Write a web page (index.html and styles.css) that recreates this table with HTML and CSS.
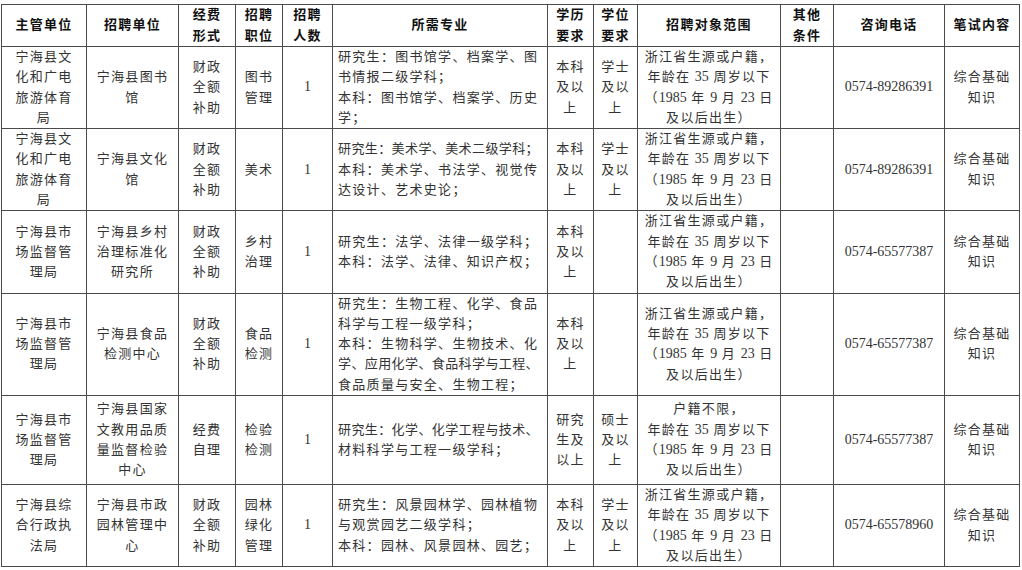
FILE: index.html
```html
<!DOCTYPE html>
<html lang="zh-CN">
<head>
<meta charset="utf-8">
<title>招聘岗位表</title>
<link rel="stylesheet" href="styles.css">
</head>
<body>
<table class="jobs">
  <colgroup>
    <col class="c1"><col class="c2"><col class="c3"><col class="c4"><col class="c5"><col class="c6">
    <col class="c7"><col class="c8"><col class="c9"><col class="c10"><col class="c11"><col class="c12">
  </colgroup>
  <thead>
    <tr class="head">
      <th>主管单位</th><th>招聘单位</th><th>经费<br>形式</th><th>招聘<br>职位</th><th>招聘<br>人数</th><th>所需专业</th>
      <th>学历<br>要求</th><th>学位<br>要求</th><th>招聘对象范围</th><th>其他<br>条件</th><th>咨询电话</th><th>笔试内容</th>
    </tr>
  </thead>
  <tbody>
    <tr class="r1">
      <td>宁海县文<br>化和广电<br>旅游体育<br>局</td>
      <td>宁海县图书<br>馆</td>
      <td>财政<br>全额<br>补助</td>
      <td>图书<br>管理</td>
      <td><span class="n">1</span></td>
      <td class="major">研究生：图书馆学、档案学、图<br>书情报二级学科；<br>本科：图书馆学、档案学、历史<br>学；</td>
      <td>本科<br>及以<br>上</td>
      <td>学士<br>及以<br>上</td>
      <td>浙江省生源或户籍，<br>年龄在 <span class="n">35</span> 周岁以下<br>（<span class="n">1985</span> 年 <span class="n">9</span> 月 <span class="n">23</span> 日<br>及以后出生）</td>
      <td></td>
      <td><span class="n">0574-89286391</span></td>
      <td>综合基础<br>知识</td>
    </tr>
    <tr class="r2">
      <td>宁海县文<br>化和广电<br>旅游体育<br>局</td>
      <td>宁海县文化<br>馆</td>
      <td>财政<br>全额<br>补助</td>
      <td>美术</td>
      <td><span class="n">1</span></td>
      <td class="major"><span class="tight">研究生：美术学、美术二级学科；</span><br>本科：美术学、书法学、视觉传<br>达设计、艺术史论；</td>
      <td>本科<br>及以<br>上</td>
      <td>学士<br>及以<br>上</td>
      <td>浙江省生源或户籍，<br>年龄在 <span class="n">35</span> 周岁以下<br>（<span class="n">1985</span> 年 <span class="n">9</span> 月 <span class="n">23</span> 日<br>及以后出生）</td>
      <td></td>
      <td><span class="n">0574-89286391</span></td>
      <td>综合基础<br>知识</td>
    </tr>
    <tr class="r3">
      <td>宁海县市<br>场监督管<br>理局</td>
      <td>宁海县乡村<br>治理标准化<br>研究所</td>
      <td>财政<br>全额<br>补助</td>
      <td>乡村<br>治理</td>
      <td><span class="n">1</span></td>
      <td class="major">研究生：法学、法律一级学科；<br>本科：法学、法律、知识产权；</td>
      <td>本科<br>及以<br>上</td>
      <td></td>
      <td>浙江省生源或户籍，<br>年龄在 <span class="n">35</span> 周岁以下<br>（<span class="n">1985</span> 年 <span class="n">9</span> 月 <span class="n">23</span> 日<br>及以后出生）</td>
      <td></td>
      <td><span class="n">0574-65577387</span></td>
      <td>综合基础<br>知识</td>
    </tr>
    <tr class="r4">
      <td>宁海县市<br>场监督管<br>理局</td>
      <td>宁海县食品<br>检测中心</td>
      <td>财政<br>全额<br>补助</td>
      <td>食品<br>检测</td>
      <td><span class="n">1</span></td>
      <td class="major">研究生：生物工程、化学、食品<br>科学与工程一级学科；<br>本科：生物科学、生物技术、化<br><span class="tight">学、应用化学、食品科学与工程、</span><br>食品质量与安全、生物工程；</td>
      <td>本科<br>及以<br>上</td>
      <td></td>
      <td>浙江省生源或户籍，<br>年龄在 <span class="n">35</span> 周岁以下<br>（<span class="n">1985</span> 年 <span class="n">9</span> 月 <span class="n">23</span> 日<br>及以后出生）</td>
      <td></td>
      <td><span class="n">0574-65577387</span></td>
      <td>综合基础<br>知识</td>
    </tr>
    <tr class="r5">
      <td>宁海县市<br>场监督管<br>理局</td>
      <td>宁海县国家<br>文教用品质<br>量监督检验<br>中心</td>
      <td>经费<br>自理</td>
      <td>检验<br>检测</td>
      <td><span class="n">1</span></td>
      <td class="major"><span class="tight">研究生：化学、化学工程与技术、</span><br>材料科学与工程一级学科；</td>
      <td>研究<br>生及<br>以上</td>
      <td>硕士<br>及以<br>上</td>
      <td>户籍不限，<br>年龄在 <span class="n">35</span> 周岁以下<br>（<span class="n">1985</span> 年 <span class="n">9</span> 月 <span class="n">23</span> 日<br>及以后出生）</td>
      <td></td>
      <td><span class="n">0574-65577387</span></td>
      <td>综合基础<br>知识</td>
    </tr>
    <tr class="r6">
      <td>宁海县综<br>合行政执<br>法局</td>
      <td>宁海县市政<br>园林管理中<br>心</td>
      <td>财政<br>全额<br>补助</td>
      <td>园林<br>绿化<br>管理</td>
      <td><span class="n">1</span></td>
      <td class="major">研究生：风景园林学、园林植物<br>与观赏园艺二级学科；<br>本科：园林、风景园林、园艺；</td>
      <td>本科<br>及以<br>上</td>
      <td>学士<br>及以<br>上</td>
      <td>浙江省生源或户籍，<br>年龄在 <span class="n">35</span> 周岁以下<br>（<span class="n">1985</span> 年 <span class="n">9</span> 月 <span class="n">23</span> 日<br>及以后出生）</td>
      <td></td>
      <td><span class="n">0574-65578960</span></td>
      <td>综合基础<br>知识</td>
    </tr>
  </tbody>
</table>
</body>
</html>
```
FILE: styles.css
```css
html, body {
  margin: 0;
  padding: 0;
  background: #ffffff;
}

body {
  font-family: "Liberation Serif", "Noto Sans CJK SC", serif;
  color: #333333;
}

.jobs {
  border-collapse: collapse;
  table-layout: fixed;
  width: 1018px;
  margin: 4px 0 0 1px;
  font-size: 13px;
  letter-spacing: 1.3px;
  line-height: 20.3px;
}

.jobs th,
.jobs td {
  border: 1px solid #4a4a4a;
  text-align: center;
  vertical-align: middle;
  padding: 0 2px;
  white-space: nowrap;
  overflow: hidden;
}

.jobs th {
  font-weight: bold;
  color: #111111;
  line-height: 20.5px;
}

.jobs td.major {
  text-align: left;
  padding-left: 5px;
}

.n {
  font-family: "Liberation Serif", serif;
  font-size: 14px;
  letter-spacing: 0;
}

.tight {
  letter-spacing: 0.4px;
}

.c1 { width: 85px; }
.c2 { width: 92px; }
.c3 { width: 57px; }
.c4 { width: 47px; }
.c5 { width: 50px; }
.c6 { width: 215px; }
.c7 { width: 46px; }
.c8 { width: 44px; }
.c9 { width: 143px; }
.c10 { width: 53px; }
.c11 { width: 111px; }
.c12 { width: 75px; }

.head { height: 40px; }
.r1 { height: 81px; }
.r2 { height: 81px; }
.r3 { height: 82px; }
.r4 { height: 100px; }
.r5 { height: 89px; }
.r6 { height: 81px; }
```
